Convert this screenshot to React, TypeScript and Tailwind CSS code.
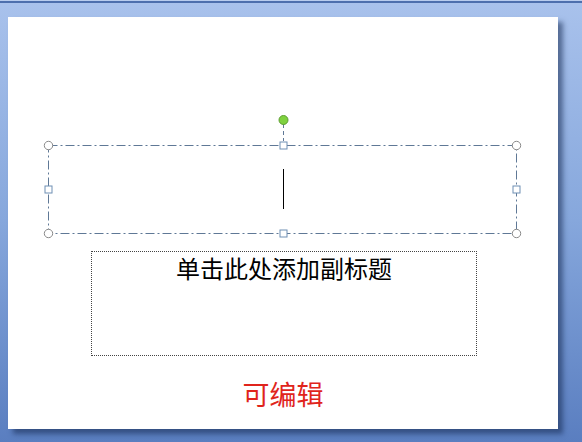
import React from "react";

export default function App() {
  return (
    <div className="w-[582px] h-[442px] overflow-hidden bg-gradient-to-b from-[#a9c2ec] via-[#86a7dc] to-[#5a7ec0] flex flex-col" style={{ fontFamily: '"Noto Sans CJK SC", "Noto Sans", sans-serif' }}>
      <div className="h-[1px] bg-[#b9cdee]" />
      <div className="h-[2px] bg-[#4d6fad]" />
      <div className="mt-[14px] ml-[8px] w-[550px] h-[412px] bg-white shadow-[5px_5px_5px_rgba(20,40,80,0.55)] flex flex-col">
        <div className="mt-[128px] ml-[40px] w-[469px] h-[89px] relative">
          <svg className="absolute left-0 top-0 overflow-visible" width="469" height="89" viewBox="0 0 469 89">
            <rect x="0.5" y="0.5" width="468" height="88" fill="none" stroke="#5f7896" strokeWidth="1" strokeDasharray="9 3 2 3" />
            <line x1="235.5" y1="-21" x2="235.5" y2="-4" stroke="#5f7896" strokeWidth="1" strokeDasharray="4 3" />
            <circle cx="235.5" cy="-25" r="4.5" fill="#7fd23f" stroke="#5e9e32" strokeWidth="1" />
            {[
              [0.5, 0.5],
              [468.5, 0.5],
              [0.5, 88.5],
              [468.5, 88.5],
            ].map(([x, y], i) => (
              <circle key={i} cx={x} cy={y} r="4.2" fill="#ffffff" stroke="#8a8a8a" strokeWidth="1" />
            ))}
            {[
              [235.5, 0.5],
              [235.5, 88.5],
              [0.5, 44.5],
              [468.5, 44.5],
            ].map(([x, y], i) => (
              <rect key={i} x={x - 3.5} y={y - 3.5} width="7" height="7" fill="#ffffff" stroke="#6f8fb4" strokeWidth="1" />
            ))}
            <line x1="235.5" y1="24" x2="235.5" y2="64" stroke="#000000" strokeWidth="1" />
          </svg>
        </div>
        <div className="mt-[17px] ml-[83px] w-[386px] h-[105px] border border-dotted border-[#444444] flex flex-col items-center pt-[1px]">
          <span className="text-[24px] leading-[30px] text-black font-normal">单击此处添加副标题</span>
        </div>
        <div className="mt-[22px] text-center text-[27px] leading-[32px] text-[#e0241c]">可编辑</div>
      </div>
    </div>
  );
}
